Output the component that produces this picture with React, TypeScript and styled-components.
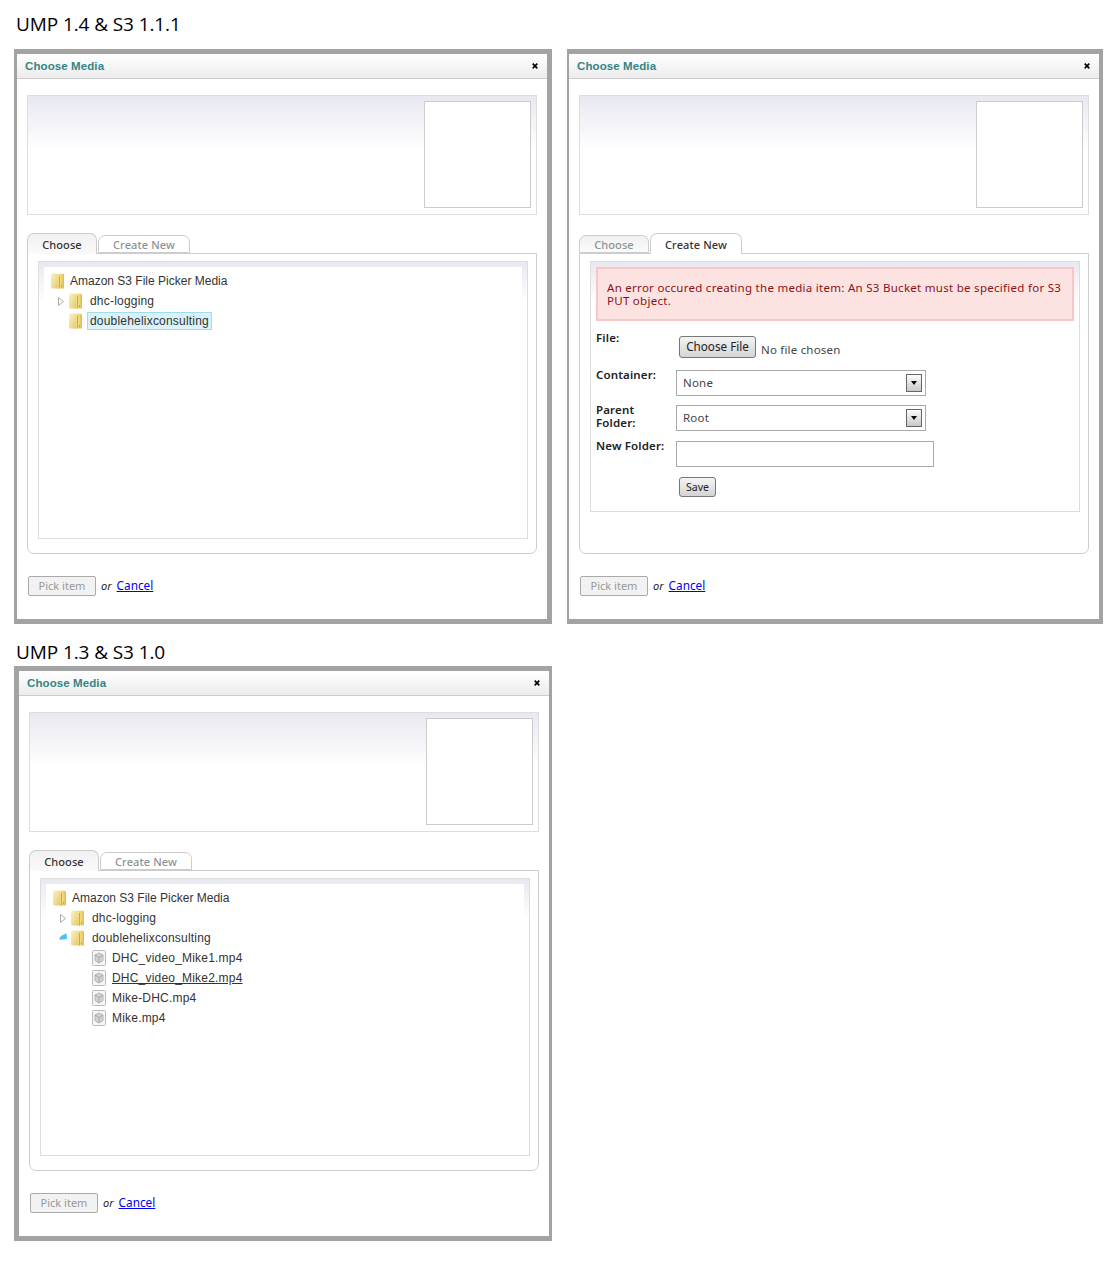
import React from "react";
import styled, { createGlobalStyle } from "styled-components";

const Global = createGlobalStyle`
  html, body { margin: 0; padding: 0; background: #fff; }
  body { font-family: "Noto Sans", "Liberation Sans", sans-serif; color: #333; }
`;

const FORM_FONT = `"Noto Sans", "DejaVu Sans", sans-serif`;
const TREE_FONT = `"Liberation Sans", Arial, sans-serif`;

const Page = styled.div`
  width: 1120px;
  height: 1261px;
  padding-left: 14px;
  box-sizing: border-box;
  overflow: hidden;
`;
const Heading = styled.h1<{ $top: number; $bottom: number }>`
  margin: ${(p) => p.$top}px 0 ${(p) => p.$bottom}px 2px;
  font: 400 19px/24px "Open Sans", "Noto Sans", sans-serif;
  letter-spacing: -0.1px;
  color: #000;
  height: 24px;
`;
const Row = styled.div`
  display: flex;
  gap: 15px;
  align-items: flex-start;
`;
const Frame = styled.section<{ $left: number; $right: number }>`
  width: 530px;
  height: 565px;
  flex: none;
  border-style: solid;
  border-color: #a3a3a3;
  border-width: 5px ${(p) => p.$right}px 5px ${(p) => p.$left}px;
  background: #fff;
`;
const Header = styled.header`
  height: 24px;
  border-bottom: 1px solid #ccc;
  background: linear-gradient(#fff, #ececec);
  display: flex;
  align-items: center;
  justify-content: space-between;
  padding: 0 9px 0 8px;
`;
const Title = styled.span`
  font: 700 11.5px/24px ${TREE_FONT};
  letter-spacing: 0.1px;
  color: #338585;
`;
const Body = styled.div`
  padding: 16px 10px 0;
`;
const Preview = styled.div`
  box-sizing: border-box;
  height: 120px;
  border: 1px solid #ddd;
  padding: 5px;
  display: flex;
  justify-content: flex-end;
  align-items: flex-start;
  background: linear-gradient(#e8e8f1, #fff 46%);
`;
const Thumb = styled.div`
  box-sizing: border-box;
  width: 107px;
  height: 107px;
  border: 1px solid #ccc;
  background: #fff;
`;
const Tabs = styled.nav`
  display: flex;
  align-items: flex-end;
  height: 20px;
  margin-top: 18px;
  position: relative;
  z-index: 1;
`;
const Tab = styled.div<{ $active: boolean; $w: number; $grey: boolean }>`
  box-sizing: border-box;
  width: ${(p) => p.$w}px;
  height: ${(p) => (p.$active ? 21 : 18)}px;
  margin-bottom: ${(p) => (p.$active ? -1 : 0)}px;
  border: 1px solid #ccc;
  border-bottom: ${(p) => (p.$active ? "none" : "1px solid #ccc")};
  border-radius: 7px 7px 0 0;
  background: ${(p) => (p.$grey ? "linear-gradient(#f1f1f1, #fafafa)" : "#fff")};
  margin-right: 1px;
  text-align: center;
  font: 500 11px/${(p) => (p.$active ? 21 : 17)}px ${FORM_FONT};
  letter-spacing: 0.1px;
  color: ${(p) => (p.$active ? "#333" : "#8a9494")};
`;
const TabPanel = styled.div`
  box-sizing: border-box;
  height: 301px;
  border: 1px solid #ccc;
  border-radius: 0 0 7px 7px;
  padding: 7px 8px 0 10px;
`;
const Inset = styled.div<{ $h: number }>`
  box-sizing: border-box;
  height: ${(p) => p.$h}px;
  border: 1px solid #ddd;
  padding: 5px;
  background: linear-gradient(#e8e8f1, #fff 40px);
`;
const Tree = styled.div`
  height: 100%;
  background: #fff;
  padding: 4px 0 0 7px;
  font: 12px/20px ${TREE_FONT};
  color: #333;
`;
const TreeRow = styled.div<{ $indent: number }>`
  display: flex;
  align-items: center;
  height: 20px;
  padding-left: ${(p) => p.$indent}px;
`;
const Toggle = styled.span`
  width: 11px;
  flex: none;
  display: flex;
  align-items: center;
`;
const NodeLabel = styled.span<{ $selected?: boolean; $hover?: boolean; $gap: number; $wide?: boolean }>`
  margin-left: ${(p) => p.$gap}px;
  padding: 0 2px;
  box-sizing: border-box;
  height: 18px;
  line-height: 16px;
  border: 1px solid ${(p) => (p.$selected ? "#9fdcf0" : "transparent")};
  background: ${(p) => (p.$selected ? "#d9f2fb" : "transparent")};
  text-decoration: ${(p) => (p.$hover ? "underline" : "none")};
  letter-spacing: ${(p) => (p.$wide ? 0.2 : 0)}px;
  white-space: nowrap;
`;
const Footer = styled.div`
  display: flex;
  align-items: center;
  margin: 22px 0 0 1px;
  font: 12px/20px ${FORM_FONT};
`;
const PickButton = styled.button`
  box-sizing: border-box;
  width: 68px;
  height: 20px;
  padding: 0;
  border: 1px solid #aaa;
  border-radius: 2px;
  background: #f2f2f2;
  color: #999;
  font: 11px/18px ${FORM_FONT};
`;
const Or = styled.em`
  margin: 0 5px 0 5px;
  color: #222;
  font-size: 11px;
`;
const CancelLink = styled.a`
  display: block;
  margin-top: -2px;
  color: #0000ee;
  text-decoration: underline;
  font-size: 11.8px;
`;
const ErrorBox = styled.div`
  box-sizing: border-box;
  height: 54px;
  border: 2px solid #fcc4c4;
  background: #fde2e2;
  color: #8a1212;
  padding: 12px 9px 0;
  font: 11.5px/13px ${FORM_FONT};
  letter-spacing: 0.28px;
`;
const Field = styled.div<{ $top: number }>`
  display: grid;
  grid-template-columns: 80px 1fr;
  margin-top: ${(p) => p.$top}px;
`;
const FieldLabel = styled.label`
  display: block;
  max-width: 74px;
  margin-top: -1px;
  font: 600 11.5px/13px ${FORM_FONT};
  letter-spacing: 0.15px;
  color: #222;
`;
const FileControl = styled.div`
  display: flex;
  align-items: flex-end;
  margin: 4px 0 0 3px;
  font: 11.5px/16px ${FORM_FONT};
  letter-spacing: 0.2px;
  color: #444;
`;
const NativeButton = styled.button<{ $w: number; $h: number; $size: number }>`
  box-sizing: border-box;
  width: ${(p) => p.$w}px;
  height: ${(p) => p.$h}px;
  padding: 0;
  border: 1px solid #777;
  border-radius: 3px;
  background: linear-gradient(#f4f4f4, #d4d4d4);
  color: #222;
  letter-spacing: 0;
  font: ${(p) => p.$size}px/1 ${FORM_FONT};
`;
const FileName = styled.span`
  margin-left: 5px;
`;
const SelectBox = styled.div`
  box-sizing: border-box;
  width: 250px;
  height: 26px;
  border: 1px solid #aaa;
  padding: 0 3px 0 6px;
  display: flex;
  align-items: center;
  justify-content: space-between;
  font: 11.5px/16px ${FORM_FONT};
  letter-spacing: 0.2px;
  color: #444;
  margin-top: 1px;
`;
const SelectArrow = styled.span`
  box-sizing: border-box;
  width: 16px;
  height: 18px;
  border: 1px solid #666;
  background: linear-gradient(#fbfbfb, #c8c8c8);
  display: flex;
  align-items: center;
  justify-content: center;
  &::before {
    content: "";
    border-style: solid;
    border-width: 4px 3.5px 0;
    border-color: #000 transparent transparent;
  }
`;
const TextBox = styled.input`
  box-sizing: border-box;
  display: block;
  width: 258px;
  height: 26px;
  margin-top: 1px;
  border: 1px solid #aaa;
  background: #fff;
`;
const SaveRow = styled.div`
  margin: 7px 0 0 83px;
`;

const FolderIcon = () => (
  <svg width="15" height="16" viewBox="0 0 15 16" style={{ flex: "none", display: "block" }}>
    <defs>
      <linearGradient id="fb" x1="0" x2="1" y1="0" y2="0">
        <stop offset="0" stopColor="#f3e08e" />
        <stop offset="0.6" stopColor="#f0d878" />
        <stop offset="1" stopColor="#dcb858" />
      </linearGradient>
      <linearGradient id="ff" x1="0" x2="1" y1="0" y2="1">
        <stop offset="0" stopColor="#fbf3c4" />
        <stop offset="1" stopColor="#e8c868" />
      </linearGradient>
    </defs>
    <path d="M6 1 L10 0.5 Q13 0.5 13 2 L13 15.5 L6 15.5 Z" fill="url(#fb)" />
    <path d="M0 2 Q0 0.5 1.5 0.5 L5 0.5 Q7 0.5 7 2.5 L7.5 15.5 L1.5 15.5 Q0 15.5 0 14 Z" fill="url(#ff)" />
    <path d="M8.5 3 L8.5 15.5" stroke="#cfa848" strokeWidth="1" />
    <path d="M10.5 12 L10.5 14.5" stroke="#7fb0d8" strokeWidth="1" />
  </svg>
);

const FileIcon = () => (
  <svg width="15" height="16" viewBox="0 0 15 16" style={{ flex: "none", display: "block" }}>
    <rect x="0.5" y="0.5" width="13" height="15" rx="1" fill="#f6f6f6" stroke="#bbb" />
    <path d="M7 3 L11 5 L11 10.5 L7 13 L3 10.5 L3 5 Z" fill="#d2d2d2" stroke="#a8a8a8" strokeWidth="0.8" />
    <path d="M3 5 L7 7.5 L11 5 M7 7.5 L7 13" fill="none" stroke="#a0a0a0" strokeWidth="0.8" />
  </svg>
);

const ClosedArrow = () => (
  <svg width="6" height="9" viewBox="0 0 6 9" style={{ display: "block" }}>
    <path d="M0.5 0.5 L5.5 4.5 L0.5 8.5 Z" fill="#fff" stroke="#aaa" />
  </svg>
);
const OpenArrow = () => (
  <svg width="8" height="7" viewBox="0 0 8 7" style={{ display: "block", margin: "-3px 0 0 -1px" }}>
    <path d="M0.3 5.5 Q1.5 2.5 7.5 0.3 L8 6 L1.5 6.8 Q0.3 6.8 0.3 5.5 Z" fill="#4fc3ee" />
  </svg>
);
const CloseIcon = () => (
  <svg width="6" height="6" viewBox="0 0 6 6" style={{ display: "block" }}>
    <path d="M0.7 0.7 L5.3 5.3 M5.3 0.7 L0.7 5.3" stroke="#000" strokeWidth="1.7" />
  </svg>
);

type TabName = "choose" | "create";

const Folder = ({ name, arrow, selected }: { name: string; arrow?: "closed" | "open" | "none"; selected?: boolean }) => (
  <TreeRow $indent={7}>
    <Toggle>
      {arrow === "closed" && <ClosedArrow />}
      {arrow === "open" && <OpenArrow />}
    </Toggle>
    <FolderIcon />
    <NodeLabel $gap={3} $selected={selected} $wide>{name}</NodeLabel>
  </TreeRow>
);

const FileNode = ({ name, hover }: { name: string; hover?: boolean }) => (
  <TreeRow $indent={39}>
    <FileIcon />
    <NodeLabel $gap={2} $hover={hover} $wide>{name}</NodeLabel>
  </TreeRow>
);

const TreeView = ({ expanded }: { expanded: boolean }) => (
  <Inset $h={278}>
    <Tree>
      <TreeRow $indent={0}>
        <FolderIcon />
        <NodeLabel $gap={1}>Amazon S3 File Picker Media</NodeLabel>
      </TreeRow>
      <Folder name="dhc-logging" arrow="closed" />
      {expanded ? (
        <>
          <Folder name="doublehelixconsulting" arrow="open" />
          <FileNode name="DHC_video_Mike1.mp4" />
          <FileNode name="DHC_video_Mike2.mp4" hover />
          <FileNode name="Mike-DHC.mp4" />
          <FileNode name="Mike.mp4" />
        </>
      ) : (
        <Folder name="doublehelixconsulting" arrow="none" selected />
      )}
    </Tree>
  </Inset>
);

const CreateForm = () => (
  <Inset $h={251}>
    <ErrorBox>
      An error occured creating the media item: An S3 Bucket must be specified for S3 PUT object.
    </ErrorBox>
    <Field $top={11}>
      <FieldLabel>File:</FieldLabel>
      <FileControl>
        <NativeButton $w={77} $h={22} $size={11.7}>Choose File</NativeButton>
        <FileName>No file chosen</FileName>
      </FileControl>
    </Field>
    <Field $top={11}>
      <FieldLabel>Container:</FieldLabel>
      <SelectBox>None<SelectArrow /></SelectBox>
    </Field>
    <Field $top={8}>
      <FieldLabel>Parent Folder:</FieldLabel>
      <SelectBox>Root<SelectArrow /></SelectBox>
    </Field>
    <Field $top={9}>
      <FieldLabel>New Folder:</FieldLabel>
      <TextBox />
    </Field>
    <SaveRow>
      <NativeButton $w={37} $h={20} $size={10.5}>Save</NativeButton>
    </SaveRow>
  </Inset>
);

const Dialog = ({ left, right, tab, expanded = false }: { left: number; right: number; tab: TabName; expanded?: boolean }) => (
  <Frame $left={left} $right={right}>
    <Header>
      <Title>Choose Media</Title>
      <CloseIcon />
    </Header>
    <Body>
      <Preview><Thumb /></Preview>
      <Tabs>
        <Tab $active={tab === "choose"} $grey $w={70}>Choose</Tab>
        <Tab $active={tab === "create"} $grey={false} $w={92}>Create New</Tab>
      </Tabs>
      <TabPanel>
        {tab === "choose" ? <TreeView expanded={expanded} /> : <CreateForm />}
      </TabPanel>
      <Footer>
        <PickButton disabled>Pick item</PickButton>
        <Or>or</Or>
        <CancelLink href="#">Cancel</CancelLink>
      </Footer>
    </Body>
  </Frame>
);

export default function App() {
  return (
    <Page>
      <Global />
      <Heading $top={12} $bottom={13}>UMP 1.4 &amp; S3 1.1.1</Heading>
      <Row>
        <Dialog left={3} right={5} tab="choose" />
        <Dialog left={2} right={4} tab="create" />
      </Row>
      <Heading $top={16} $bottom={2}>UMP 1.3 &amp; S3 1.0</Heading>
      <Row>
        <Dialog left={5} right={3} tab="choose" expanded />
      </Row>
    </Page>
  );
}
